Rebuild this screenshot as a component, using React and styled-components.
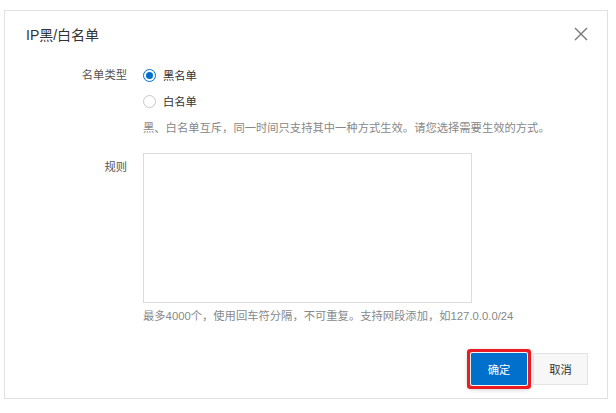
import React, { useState } from "react";
import styled, { createGlobalStyle } from "styled-components";

const GlobalStyle = createGlobalStyle`
  html, body {
    margin: 0;
    padding: 0;
    background: #fff;
  }
  body {
    font-family: "Liberation Sans", "Noto Sans CJK SC", sans-serif;
    color: #333;
  }
`;

const Page = styled.div`
  padding: 10px 0 0 4px;
`;

const Dialog = styled.div`
  box-sizing: border-box;
  width: 604px;
  height: 389px;
  border: 1px solid #e1e1e1;
  background: #fff;
  display: flex;
  flex-direction: column;
`;

const Header = styled.div`
  height: 46px;
  display: flex;
  align-items: center;
  justify-content: space-between;
  padding: 0 19px 0 21px;
`;

const Title = styled.h2`
  margin: 0;
  font-size: 14px;
  font-weight: 400;
  color: #333;
`;

const CloseButton = styled.button`
  width: 14px;
  height: 14px;
  padding: 0;
  border: none;
  background: none;
  display: flex;
  cursor: pointer;
  svg {
    display: block;
  }
`;

const Body = styled.div`
  padding-top: 5px;
`;

const Row = styled.div`
  display: grid;
  grid-template-columns: 122px 1fr;
  column-gap: 16px;
  margin-top: ${(p) => p.$top || 0}px;
`;

const Label = styled.div`
  text-align: right;
  font-size: 11.3px;
  color: #555;
  line-height: ${(p) => p.$lh || 26}px;
`;

const Field = styled.div`
  display: flex;
  flex-direction: column;
`;

const RadioItem = styled.label`
  display: flex;
  align-items: center;
  height: 26px;
  gap: 7px;
  font-size: 11.3px;
  color: #333;
  cursor: pointer;
`;

const RadioCircle = styled.span`
  box-sizing: border-box;
  width: 13px;
  height: 13px;
  border-radius: 50%;
  border: 1px solid ${(p) => (p.$checked ? "#0070cc" : "#c8c8c8")};
  background: #fff;
  display: flex;
  align-items: center;
  justify-content: center;
  &::after {
    content: "";
    width: 7px;
    height: 7px;
    border-radius: 50%;
    background: ${(p) => (p.$checked ? "#0070cc" : "transparent")};
  }
`;

const Tip = styled.div`
  font-size: 11.3px;
  color: #888;
  line-height: ${(p) => p.$lh || 20}px;
  margin-top: ${(p) => p.$top || 0}px;
`;

const RuleInput = styled.textarea`
  box-sizing: border-box;
  width: 329px;
  height: 150px;
  border: 1px solid #dcdcdc;
  border-radius: 0;
  resize: none;
  outline: none;
  padding: 6px 8px;
  font-family: inherit;
  font-size: 11.3px;
  color: #333;
`;

const Footer = styled.div`
  margin-top: auto;
  display: flex;
  justify-content: flex-end;
  align-items: center;
  gap: 6px;
  padding: 0 19px 13px 0;
`;

const Button = styled.button`
  box-sizing: border-box;
  height: 32px;
  padding: 0;
  width: ${(p) => (p.$primary ? 56 : 55)}px;
  font-family: inherit;
  font-size: 11.3px;
  cursor: pointer;
  border: 1px solid ${(p) => (p.$primary ? "#0070cc" : "#e3e3e3")};
  background: ${(p) => (p.$primary ? "#0070cc" : "#f7f7f7")};
  color: ${(p) => (p.$primary ? "#fff" : "#333")};
  border-radius: ${(p) => (p.$primary ? "1px" : "0")};
  box-shadow: ${(p) =>
    p.$highlight
      ? "0 0 0 1px #f4f4f4, 0 0 0 4px #ea1b22, 0 1px 5px 3px rgba(0,0,0,0.25)"
      : "none"};
`;

export default function App() {
  const [mode, setMode] = useState("black");

  return (
    <Page>
      <GlobalStyle />
      <Dialog>
        <Header>
          <Title>IP黑/白名单</Title>
          <CloseButton aria-label="关闭">
            <svg width="14" height="14" viewBox="0 0 14 14">
              <path d="M1 1L13 13M13 1L1 13" stroke="#777" strokeWidth="1.4" fill="none" />
            </svg>
          </CloseButton>
        </Header>
        <Body>
          <Row>
            <Label>名单类型</Label>
            <Field>
              <RadioItem onClick={() => setMode("black")}>
                <RadioCircle $checked={mode === "black"} />
                黑名单
              </RadioItem>
              <RadioItem onClick={() => setMode("white")}>
                <RadioCircle $checked={mode === "white"} />
                白名单
              </RadioItem>
              <Tip $lh={28}>黑、白名单互斥，同一时间只支持其中一种方式生效。请您选择需要生效的方式。</Tip>
            </Field>
          </Row>
          <Row $top={11}>
            <Label $lh={28}>规则</Label>
            <Field>
              <RuleInput />
              <Tip $top={3}>最多4000个，使用回车符分隔，不可重复。支持网段添加，如127.0.0.0/24</Tip>
            </Field>
          </Row>
        </Body>
        <Footer>
          <Button $primary $highlight>确定</Button>
          <Button>取消</Button>
        </Footer>
      </Dialog>
    </Page>
  );
}
